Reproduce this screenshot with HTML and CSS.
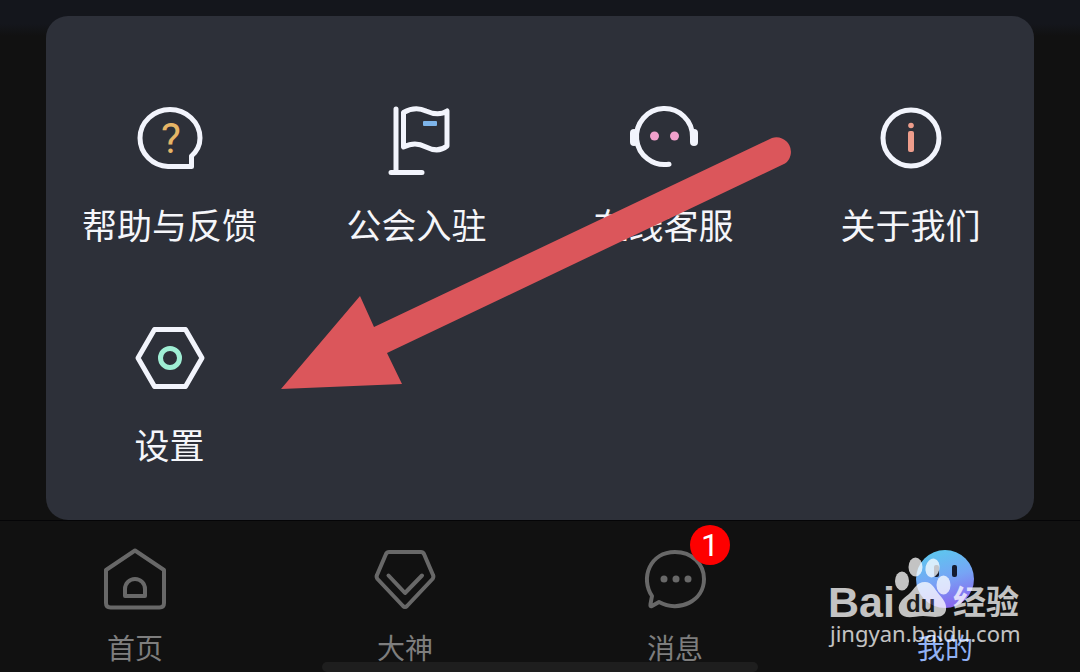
FILE: index.html
```html
<!DOCTYPE html>
<html lang="zh-CN">
<head>
    <meta charset="UTF-8">
    <meta name="viewport" content="width=device-width, initial-scale=1">
    <title>我的</title>
    <link rel="stylesheet" href="styles.css">
</head>
<body>
    <main class="content">
        <nav class="panel">
            <a class="entry" href="#help">
                <svg class="entry-icon" viewBox="0 0 72 72">
                    <path d="M34 64.500C19 64 6 52 6 36S20 7.500 36 7.500 66 20 66 36C66 43 62 50 57.500 54V64.500Z"/>
                    <text class="question" x="37" y="51">?</text>
                </svg>
                <span>帮助与反馈</span>
            </a>
            <a class="entry" href="#guild">
                <svg class="entry-icon" viewBox="0 0 72 72">
                    <path d="M15 7V70M10 70.500H41"/>
                    <path d="M22.500 10.500C32 5 39 6 45 9C54 13 60 13 66 9V44C60 49 53 49 45 45C37 41 31 41 22.500 45Z"/>
                    <rect class="blue" x="42" y="19" width="14" height="5" rx="1"/>
                </svg>
                <span>公会入驻</span>
            </a>
            <a class="entry" href="#service">
                <svg class="entry-icon" viewBox="0 0 72 72">
                    <path d="M64.500 35A28 28 0 1 0 41 62.200"/>
                    <rect class="white" x="2" y="27" width="8" height="17" rx="4"/>
                    <rect class="white" x="62" y="27" width="8" height="17" rx="4"/>
                    <circle class="pink" cx="26.500" cy="34" r="4.500"/>
                    <circle class="pink" cx="46.500" cy="34" r="4.500"/>
                </svg>
                <span>在线客服</span>
            </a>
            <a class="entry" href="#about">
                <svg class="entry-icon" viewBox="0 0 72 72">
                    <circle cx="36" cy="36" r="28"/>
                    <circle class="salmon" cx="36" cy="23.500" r="2.800"/>
                    <rect class="salmon" x="33" y="29" width="6" height="21" rx="2"/>
                </svg>
                <span>关于我们</span>
            </a>
            <a class="entry" href="#settings">
                <svg class="entry-icon" viewBox="0 0 72 72">
                    <path d="M4 36L20.500 7.500H51.500L68 36L51.500 64.500H20.500Z"/>
                    <circle class="green" cx="36" cy="36" r="9.500"/>
                </svg>
                <span>设置</span>
            </a>
        </nav>
        <svg class="arrow" viewBox="0 0 512 254">
            <path d="M0 253L79 160L93 191L491 2A14.500 14.500 0 0 1 504 27.500L106 217L121 248Z"/>
        </svg>
    </main>

    <nav class="tabbar">
        <a class="tab" href="#home">
            <svg class="tab-icon" viewBox="0 0 64 64">
                <path d="M32 3.500L61 23V56Q61 60.500 56.500 60.500H7.500Q3 60.500 3 56V23Z"/>
                <path d="M22 49V42A10 10 0 0 1 42 42V49Z"/>
            </svg>
            <span>首页</span>
        </a>
        <a class="tab" href="#master">
            <svg class="tab-icon" viewBox="0 0 64 64">
                <path d="M16 5H48Q50 5 51 7L60 28Q61 30 59.500 32L34 59Q32 61 30 59L4.500 32Q3 30 4 28L13 7Q14 5 16 5Z"/>
                <path d="M15.500 28.500L32 46L49 28.500"/>
            </svg>
            <span>大神</span>
        </a>
        <a class="tab" href="#message">
            <div class="icon-wrap">
                <svg class="tab-icon" viewBox="0 0 64 64">
                    <path d="M9 49C-3 31 7 5 32 5C49 5 61 17 61 32C61 54 36 66 16 55L9 59Q7 60 7.500 57Z"/>
                    <circle class="dot" cx="21" cy="32" r="3.500"/>
                    <circle class="dot" cx="33" cy="32" r="3.500"/>
                    <circle class="dot" cx="45" cy="32" r="3.500"/>
                </svg>
                <b class="badge">1</b>
            </div>
            <span>消息</span>
        </a>
        <a class="tab active" href="#mine">
            <svg class="tab-icon" viewBox="0 0 64 64">
                <defs>
                    <linearGradient id="face" x1="0.300" y1="0" x2="0.600" y2="1">
                        <stop offset="0" stop-color="#5cc8ee"/>
                        <stop offset="0.500" stop-color="#76a5f5"/>
                        <stop offset="1" stop-color="#8a63ee"/>
                    </linearGradient>
                </defs>
                <circle class="face" cx="32" cy="32" r="29"/>
                <rect class="eye" x="21" y="18" width="5" height="12" rx="2"/>
                <rect class="eye" x="39" y="18" width="5" height="12" rx="2"/>
            </svg>
            <span>我的</span>
        </a>
        <i class="home-bar"></i>
        <svg class="watermark" viewBox="0 0 194 94">
            <text class="bai" x="0" y="61">Bai</text>
            <ellipse cx="74" cy="25" rx="7" ry="9.500"/>
            <ellipse cx="87.500" cy="11" rx="7" ry="9.500"/>
            <ellipse cx="104.500" cy="12" rx="7" ry="9.500" transform="rotate(12 104.500 12)"/>
            <ellipse cx="115.500" cy="29" rx="7" ry="9.500"/>
            <path d="M97 26C104 26 106 32 110 37C115 43 119 47 118 54C116 63 107 61 95 60C84 61 76 63 72 57C68 49 74 43 81 38C87 33 88 26 97 26Z"/>
            <text class="du" x="78" y="56">du</text>
            <text class="jy" x="125" y="58">经验</text>
            <text class="site" x="2" y="86">jingyan.baidu.com</text>
        </svg>
    </nav>
</body>
</html>
```
FILE: styles.css
```css
*{
    box-sizing:border-box;
    margin:0;
    padding:0;
}
body{
    min-height:100vh;
    display:flex;
    flex-direction:column;
    background:#111;
    color:#f5f6fa;
    font-family:"Noto Sans CJK SC", sans-serif;
}
a{
    color:inherit;
    text-decoration:none;
}
svg{
    display:block;
    overflow:visible;
}
.content{
    flex:1;
    position:relative;
    padding:16px 46px 0;
    background:linear-gradient(#14161c 24px, #111 36px);
}
/* menu card */
.panel{
    display:grid;
    grid-template-columns:repeat(4, 1fr);
    row-gap:78px;
    padding:86px 0 56px;
    background:#2d3039;
    border-radius:22px;
}
.entry{
    display:flex;
    flex-direction:column;
    align-items:center;
    gap:30px;
    font-size:35px;
    line-height:40px;
}
.entry-icon{
    width:72px;
    height:72px;
    fill:none;
    stroke:#f2f4fc;
    stroke-width:5;
    stroke-linejoin:round;
    stroke-linecap:round;
}
.entry-icon .question{
    fill:#e6b566;
    stroke:none;
    font:400 42px Roboto, sans-serif;
    text-anchor:middle;
}
.entry-icon .white{
    fill:#f2f4fc;
    stroke:none;
}
.entry-icon .blue{
    fill:#7db4ea;
    stroke:none;
}
.entry-icon .pink{
    fill:#f0a0cc;
    stroke:none;
}
.entry-icon .salmon{
    fill:#ee9d8c;
    stroke:none;
}
.entry-icon .green{
    stroke:#a0efd5;
}
.arrow{
    position:absolute;
    left:281px;
    top:136px;
    width:512px;
    height:254px;
    fill:#db565b;
    pointer-events:none;
}
/* bottom bar */
.tabbar{
    position:relative;
    display:grid;
    grid-template-columns:repeat(4, 1fr);
    padding:26px 0 8px;
    border-top:1px solid #050507;
    background:#111;
}
.tab{
    display:flex;
    flex-direction:column;
    align-items:center;
    gap:19px;
    color:#7e7e7e;
    font-size:28px;
    line-height:34px;
}
.tab.active{
    color:#92b2f4;
}
.tab-icon{
    width:64px;
    height:64px;
    fill:none;
    stroke:#686868;
    stroke-width:4;
    stroke-linejoin:round;
    stroke-linecap:round;
}
.tab-icon .dot{
    fill:#686868;
    stroke:none;
}
.tab-icon .face{
    fill:url(#face);
    stroke:none;
}
.tab-icon .eye{
    fill:#151c30;
    stroke:none;
}
.icon-wrap{
    position:relative;
}
.badge{
    position:absolute;
    left:47px;
    top:-22px;
    width:40px;
    height:40px;
    border-radius:50%;
    background:#fe0000;
    color:#fff;
    font-family:Roboto, sans-serif;
    font-size:32px;
    font-weight:400;
    line-height:40px;
    text-align:center;
}
.home-bar{
    position:absolute;
    left:50%;
    bottom:0;
    width:436px;
    height:10px;
    margin-left:-218px;
    border-radius:5px;
    background:#1e1e1e;
}
.watermark{
    position:absolute;
    right:58px;
    bottom:22px;
    width:194px;
    height:94px;
    fill:#fff;
    opacity:.75;
    pointer-events:none;
}
.bai{
    font:bold 43px "Liberation Sans", sans-serif;
}
.du{
    fill:#222;
    font:bold 24px "Liberation Sans", sans-serif;
}
.jy{
    font:bold 33px "Noto Sans CJK SC", sans-serif;
}
.site{
    font:400 22px "Noto Sans", sans-serif;
}
```
